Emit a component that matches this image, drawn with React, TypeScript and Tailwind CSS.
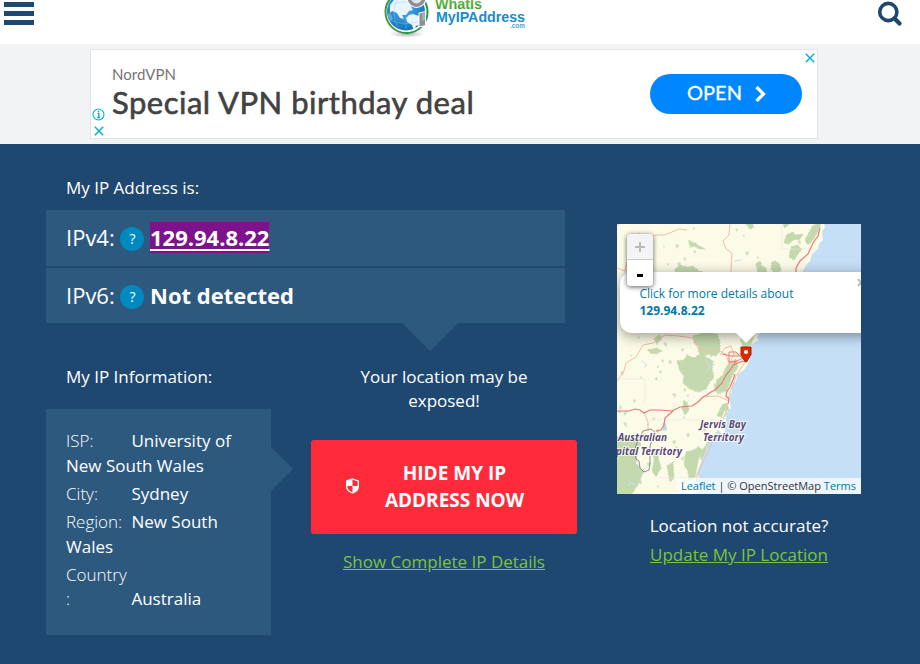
import React from "react";

function Logo() {
  return (
    <svg width="150" height="44" viewBox="380 0 150 44" className="block">
      <defs>
        <radialGradient id="globe" cx="45%" cy="40%" r="60%">
          <stop offset="0" stopColor="#4fb4ee" />
          <stop offset="1" stopColor="#1572b8" />
        </radialGradient>
        <radialGradient id="shade">
          <stop offset="0" stopColor="#777" stopOpacity=".6" />
          <stop offset="1" stopColor="#999" stopOpacity="0" />
        </radialGradient>
        <linearGradient id="ring" x1="0" x2="1">
          <stop offset="0" stopColor="#3f9a3c" />
          <stop offset="1" stopColor="#1f9a48" />
        </linearGradient>
        <linearGradient id="green" x1="0" x2="0" y1="0" y2="1">
          <stop offset="0" stopColor="#7cc242" />
          <stop offset="1" stopColor="#2f9e3a" />
        </linearGradient>
      </defs>
      <ellipse cx="407" cy="34" rx="18" ry="4" fill="url(#shade)" />
      <circle cx="406.500" cy="12" r="21" fill="#fff" stroke="url(#ring)" strokeWidth="2" />
      <circle cx="406" cy="11.500" r="19" fill="url(#globe)" />
      <g fill="#e9f5fc">
        <path d="M390 5l4-5h13l3 5 3 5-4 1-3 4-4 0 2 4-4-1-3-5-5-2-2 2z" />
        <path d="M409 15l4-1 6 2v9l-3 1-2 5-2-6-5-3-1-4z" />
        <path d="M388 13l3 1 2 5-2 2-3-4z" opacity=".3" />
      </g>
      <path d="M388 7c8-7 26-7 34 0M388 19c10 6 26 6 36 0M398-2c-5 9-5 21 0 29M406 16v13" fill="none" stroke="#86ccf3" strokeWidth=".6" opacity=".6" />
      <circle cx="416.500" cy="-2" r="10" fill="#fff" />
      <circle cx="416.500" cy="-2" r="7.200" fill="#dfe5e8" stroke="#8b9094" strokeWidth="3.500" />
      <path d="M419 13l6.500-1.500V25.500l-6.500 1.500z" fill="#8b9096" stroke="#fff" strokeWidth="1" />
      <path d="M422 13l3-.7V20l-3 1z" fill="#a9adb1" />
      <text x="435" y="9" textLength="47" lengthAdjust="spacingAndGlyphs" fontSize="15" fontWeight="700" fill="url(#green)" fontFamily="Liberation Sans, sans-serif">WhatIs</text>
      <text x="436" y="22" textLength="89" lengthAdjust="spacingAndGlyphs" fontSize="15.500" fontWeight="700" fill="#188ccf" fontFamily="Liberation Sans, sans-serif">MyIPAddress</text>
      <text x="510" y="28" textLength="15" lengthAdjust="spacingAndGlyphs" fontSize="7" fontWeight="700" fill="#3fa7dc" fontFamily="Liberation Sans, sans-serif">.com</text>
    </svg>
  );
}

function Cross() {
  return (
    <svg width="10" height="10" viewBox="0 0 10 10" className="block">
      <path d="M.8.8l8.400 8.400M9.200.8L.8 9.200" stroke="#00aecd" strokeWidth="1.400" />
    </svg>
  );
}

function Banner() {
  return (
    <div className="flex h-[100px] bg-[#f1f3f5] pl-[90px] pt-[5px]">
      <div className="flex h-[90px] w-[728px] border border-[#e2e4e7] bg-white">
        <div className="flex w-[21px] flex-col gap-[4px] pl-[1px] pt-[58px]">
          <svg width="13" height="13" viewBox="0 0 13 13">
            <circle cx="6.500" cy="6.500" r="5.500" fill="none" stroke="#00aecd" strokeWidth="1.100" />
            <path d="M5.500 5.500h1.300v4M5.200 9.500h3" fill="none" stroke="#00aecd" strokeWidth="1.300" />
            <path d="M5.800 2.700h1.500v1.500H5.800z" fill="#00aecd" />
          </svg>
          <div className="pl-[1.500px] pt-[0.500px]"><Cross /></div>
        </div>
        <div className="w-[538px] pt-[14px] font-['Lato',sans-serif]">
          <div className="h-5 text-[15px] leading-5 text-[#757575]">NordVPN</div>
          <div className="h-[36px] whitespace-nowrap text-[31px] leading-[36px] tracking-[0.5px] text-[#424242] [-webkit-text-stroke:0.6px_#424242]">Special VPN birthday deal</div>
        </div>
        <button className="mt-6 flex h-10 w-[152px] items-center justify-center gap-[13px] rounded-full bg-[#0087ff] pl-[1px] font-['Lato',sans-serif] text-[20px] leading-10 text-white [-webkit-text-stroke:0.3px_#fff]">
          <span className="-mt-[4px]">OPEN</span>
          <svg width="11" height="16" viewBox="0 0 11 16"><path d="M1.500 1l7 7-7 7" fill="none" stroke="#fff" strokeWidth="3.300" /></svg>
        </button>
        <div className="pl-[2.500px] pt-[2.500px]"><Cross /></div>
      </div>
    </div>
  );
}

function IpRow({ label, children, tall }: { label: string; children: React.ReactNode; tall?: boolean }) {
  return (
    <div className={`flex items-center bg-[#2d597f] pl-5 text-[22px] ${tall ? "h-[56px]" : "h-[55px]"}`}>
      <span className="-mt-[2px] w-[54px] whitespace-nowrap">{label}</span>
      <span className="mt-[2px] flex size-6 items-center justify-center rounded-full bg-[#0089c0] pl-[1px] text-[14px]">?</span>
      <span className="-mt-[2px] ml-[6px] font-bold">{children}</span>
    </div>
  );
}

function InfoLine({ label, children }: { label: React.ReactNode; children: React.ReactNode }) {
  return (
    <p className="mb-[3.600px] leading-[24.600px]">
      <span className="inline-block w-[61px] whitespace-nowrap font-light">{label}</span> {children}
    </p>
  );
}

const greenery = [
  "M76 112l10-3 14 1 3 8 0 9-4 5-7-2-6 3-5-6 1-5-5-3z",
  "M60 137l7-1 3-5 7 3 6-4 8 4 5 3-1 8 2 8-5 6-3 6-8 3-8-3-7-6 1-7-4-5z",
  "M112 139l7-4 2 8-6 9-3 9-3 6-8 3-4-5 3-9 6-5 2-6z",
  "M58 46l4-5 9 2 5-1 6 5 4 1v5H58z",
  "M72 17l6 2 4 3 6 3-5 0-6-3-4 1z",
  "M139 40l4-3 2 5 4 2 1 5h-9z",
  "M155 38l4-1 4 4 1 6-6 2-4-4z",
  "M170 11l5-3 4 3 7-1-3 5-7 1-4 4-5-1 1-4z",
  "M195 3l4-3h5l-3 7-5 9-5 5-3-5z",
  "M174 23l6-2 5 4-4 5-4 6-5-3z",
  "M166 0h6l-4 4z",
  "M129 0l6 0 2 3-4 2z",
  "M31 126l9-2 5 3-6 3-6-1z",
  "M37 115l5-4 3 3-5 6z",
  "M123 116l6-5 8 1-3 9-7 3z",
  "M105 181l5-2 2 7-5 1-2 6-5-1z",
  "M67 178l3 0 2 8-4 5-3-6z",
  "M93 215l5-2-1 7-6 7-2 10-5-2-1-6 4-5z",
  "M69 228l8-2 4-3 4 2-4 12-3 17-6 2-1-9-4-6z",
  "M36 225l6 1-1 7 3 11-5 8-4-5 2-10z",
  "M0 213l9-1 10 3 5 5-4 8-1 11 7 9-4 11-8 12H0z",
  "M50 242l6-4 1 16-4 4z",
];

function MapArt() {
  return (
    <svg width="244" height="270" viewBox="0 0 244 270" className="block">
      <rect width="244" height="270" fill="#fcfbe7" />
      <g fill="#c4d9ae" stroke="#c4d9ae" strokeWidth="1.200" strokeDasharray="2 1 1 2">
        {greenery.map((d) => <path key={d} d={d} />)}
      </g>
      <g fill="#c4d9ae" opacity=".75">
        {Array.from({ length: 90 }, (_, i) => {
          const y = (i * 103) % 269;
          const x = (i * i * 17 + i * 29) % (y < 110 ? 190 : Math.round(112 - (y - 110) / 4));
          return <path key={i} d={`M${x} ${y}l${1 + (i % 3)}-1 1 2-${1 + (i % 2)} ${1 + (i % 3)}z`} />;
        })}
      </g>
      <path d="M207 0l1 4-3 3 1 9-4 4-1 5-6 5-2 7-4 4-20 40-29 32 2 3-6 3-2 4 0 8L131 140 127 146 121 150 119 157 115 162 115 168 112 173 114 184 108 190 109 197 104 201 109 207 105 210 101 206 97 211 91 220 88 228 84 238 80 249 82 254 80 270H244V0z" fill="#c5dff7" />
      <g fill="none" stroke="#c5dff7" strokeWidth="1">
        <path d="M118 38c1-4 5 1 6-3M89 135l2 5 2 3-4 6M93 143l5-3M25 137l5 4-3 2M8 201l3 2M11 255l3 4 5 2M14 259l-3 2" />
      </g>
      <path d="M46 198l3 2 1 6-4 1z" fill="#b9d8f0" />
      <path d="M0 155h28v24M28 196h74M165 0v25h40M112 168h-34M42 254h38" fill="none" stroke="#e9e5ee" strokeWidth=".6" />
      <g fill="none" stroke="#f5bda5" strokeWidth="1">
        <path d="M8 47l2-9 8-12 6-9 15-6h8l8-3 7-3 8 1M113 0l-1 11-6 6 3 8 6 4-1 19M0 157l7-10 2-8 10-6 7-12 10-2 12-8 14 1 14 2 5 10 12 4 10-1 7 4M27 188l4 10 0 9M111 183l-5 12-4 10M98 212l-10 22-8 17-1 14M86 173l15-1 11 5M128 138l-9 14-8 23M0 44l8 3" />
        <path d="M103 131l5-7 6-2 3 8 9 0 2 6-8 3M109 130l3 10 9-2M117 129l-4 11" />
      </g>
      <g fill="none" stroke="#e8797a" strokeWidth="1.200">
        <path d="M203 4l-2 8-5 7-5 11-8 7-4 7v7M0 187l12 0 6-2 5 1 4 3 6-3 10 0 12 1 8-4 12-1 6-4 5-5 4-2 4-3 4-2 7-7 4-8 5-6 5-8M56 187l-8 7-1 7-3 5-5 1M118 150l-2 6-3 7-3 4-1 5 3 3-1 5" />
        <path d="M105 130l9 2 12 0M126 134l-6 3-8 1v-10h7l8 8M117 141l6-3 7-1" strokeWidth="1" />
      </g>
      <path d="M34 205l4 3-3 8-2 6 0 18-1 6-5 2-4-4-1-7-3-2-1-10 3-9 3-5 2-4z" fill="none" stroke="#5c5066" strokeWidth=".8" opacity=".8" />
      <g fontFamily="Noto Sans, sans-serif" fontSize="10" fontStyle="italic" fontWeight="700" fill="#5b4a72" stroke="#fff" strokeWidth="2" strokeOpacity=".75" paintOrder="stroke">
        <text x="83" y="203.500" textLength="46">Jervis Bay</text>
        <text x="86" y="217" textLength="41">Territory</text>
        <text x="1" y="217" textLength="49">Australian</text>
        <text x="-13" y="230.500" textLength="78">Capital Territory</text>
      </g>
    </svg>
  );
}

function LocationMap() {
  return (
    <div className="relative h-[270px] w-[244px] overflow-hidden font-['Open_Sans',sans-serif]">
      <MapArt />
      <div className="absolute left-[3px] top-[48px] h-[61px] w-[270px] rounded-xl bg-white pl-[19.500px] pt-[13px] text-[12px] leading-[17px] text-[#0078a8] shadow-[0_3px_14px_rgba(0,0,0,0.4)]">
        Click for more details about<br /><b>129.94.8.22</b>
      </div>
      <svg width="24" height="12" viewBox="0 0 24 12" className="absolute left-[117px] top-[108px]"><path d="M1 0h22L12 11z" fill="#fff" /></svg>
      <svg width="8" height="8" viewBox="0 0 8 8" className="absolute left-[240px] top-[55px]"><path d="M1 0l6 7M7 0L1 7" stroke="#bbb" strokeWidth="2" /></svg>
      <svg width="12" height="17" viewBox="0 0 12 17" className="absolute left-[123px] top-[122px]">
        <path d="M1 1h10v7.500L6.500 16h-1L1 8.500z" fill="#db2c00" stroke="#a32000" />
        <circle cx="6" cy="6" r="2" fill="#fff" />
      </svg>
      <div className="absolute left-[10px] top-[10px] w-[26px] overflow-hidden rounded shadow-[0_1px_5px_rgba(0,0,0,0.65)]">
        <div className="flex h-[26px] items-center justify-center border-b border-[#ccc] bg-[#f4f4f4]">
          <svg width="10" height="10" viewBox="0 0 10 10"><path d="M0 5h10M5 0v10" stroke="#bbb" strokeWidth="2" /></svg>
        </div>
        <div className="flex h-[26px] items-center justify-center bg-white pt-1"><div className="h-[3px] w-[6px] bg-black" /></div>
      </div>
      <div className="absolute bottom-0 right-0 h-4 whitespace-nowrap bg-white/70 px-[5px] text-[11px] leading-4 text-[#333]">
        <span className="text-[#0078a8]">Leaflet</span> | © OpenStreetMap <span className="text-[#0078a8]">Terms</span>
      </div>
    </div>
  );
}

export default function App() {
  return (
    <div className="h-[664px] w-[920px] overflow-hidden bg-[#1f4871] font-['Open_Sans',sans-serif] text-[17px] leading-6 text-white">
      <header className="flex h-11 items-start justify-between bg-white pl-1 pr-[17px]">
        <div className="flex w-[376px] flex-col gap-1 pt-[2px]">
          <i className="h-[5px] w-[30px] bg-[#1f4871]" />
          <i className="h-[5px] w-[30px] bg-[#1f4871]" />
          <i className="h-[5px] w-[30px] bg-[#1f4871]" />
        </div>
        <Logo />
        <div className="flex flex-1 justify-end">
          <svg width="26" height="28" viewBox="0 0 26 28">
            <circle cx="11.300" cy="12" r="8.600" fill="none" stroke="#1f4871" strokeWidth="3.600" />
            <path d="M17.500 18.500l5 5" stroke="#1f4871" strokeWidth="4.200" strokeLinecap="round" />
          </svg>
        </div>
      </header>
      <Banner />
      <main className="flex">
        <section className="w-[617px] pl-[46px] pt-8">
          <h2 className="mb-[10px] pl-5">My IP Address is:</h2>
          <div className="flex w-[519px] flex-col gap-[2px]">
            <IpRow label="IPv4:" tall><span className="block h-[31px] bg-[#7c138c] leading-[31px] underline decoration-2 underline-offset-[3px]">129.94.8.22</span></IpRow>
            <IpRow label="IPv6:">Not detected</IpRow>
          </div>
          <svg width="56" height="28" viewBox="0 0 56 28" className="ml-[356px] block"><path d="M0 0h56L28 28z" fill="#2d597f" /></svg>
          <div className="flex pt-[14px]">
            <div className="w-[225px]">
              <h2 className="mb-5 pl-5">My IP Information:</h2>
              <div className="h-[226px] bg-[#2d597f] px-5 pt-5">
                <InfoLine label="ISP:">University of New South Wales</InfoLine>
                <InfoLine label="City:">Sydney</InfoLine>
                <InfoLine label="Region:">New South Wales</InfoLine>
                <InfoLine label={<span className="block leading-6">Country<br />:</span>}>Australia</InfoLine>
              </div>
            </div>
            <svg width="22" height="44" viewBox="0 0 22 44" className="mt-[82px] block"><path d="M0 0l22 22L0 44z" fill="#2d597f" /></svg>
            <div className="ml-[18px] flex w-[266px] flex-col items-center text-center">
              <p>Your location may be<br />exposed!</p>
              <button className="mt-[27px] flex h-[94px] w-full items-center rounded-[3px] bg-[#ff2b3a] pl-[34px] text-[19px] font-bold leading-[27px]">
                <svg width="15" height="16" viewBox="0 0 15 16" className="-mt-[2px]">
                  <path d="M7.500 1L13.300 3v5.500c0 3-3 5.500-5.800 6.500-2.800-1-5.800-3.500-5.800-6.500V3z" fill="none" stroke="#fff" strokeWidth="1.300" />
                  <path d="M7.500 1v7h5.800c0 3.500-3 6-5.800 7V8H1.700V3z" fill="#fff" />
                </svg>
                <span className="ml-[19.500px] w-[150px]">HIDE MY IP ADDRESS NOW</span>
              </button>
              <a className="mt-4 text-[#7ec242] underline">Show Complete IP Details</a>
            </div>
          </div>
        </section>
        <section className="flex w-[244px] flex-col items-center pt-20">
          <LocationMap />
          <p className="mt-5">Location not accurate?</p>
          <a className="mt-[5px] text-[#7ec242] underline">Update My IP Location</a>
        </section>
      </main>
    </div>
  );
}
